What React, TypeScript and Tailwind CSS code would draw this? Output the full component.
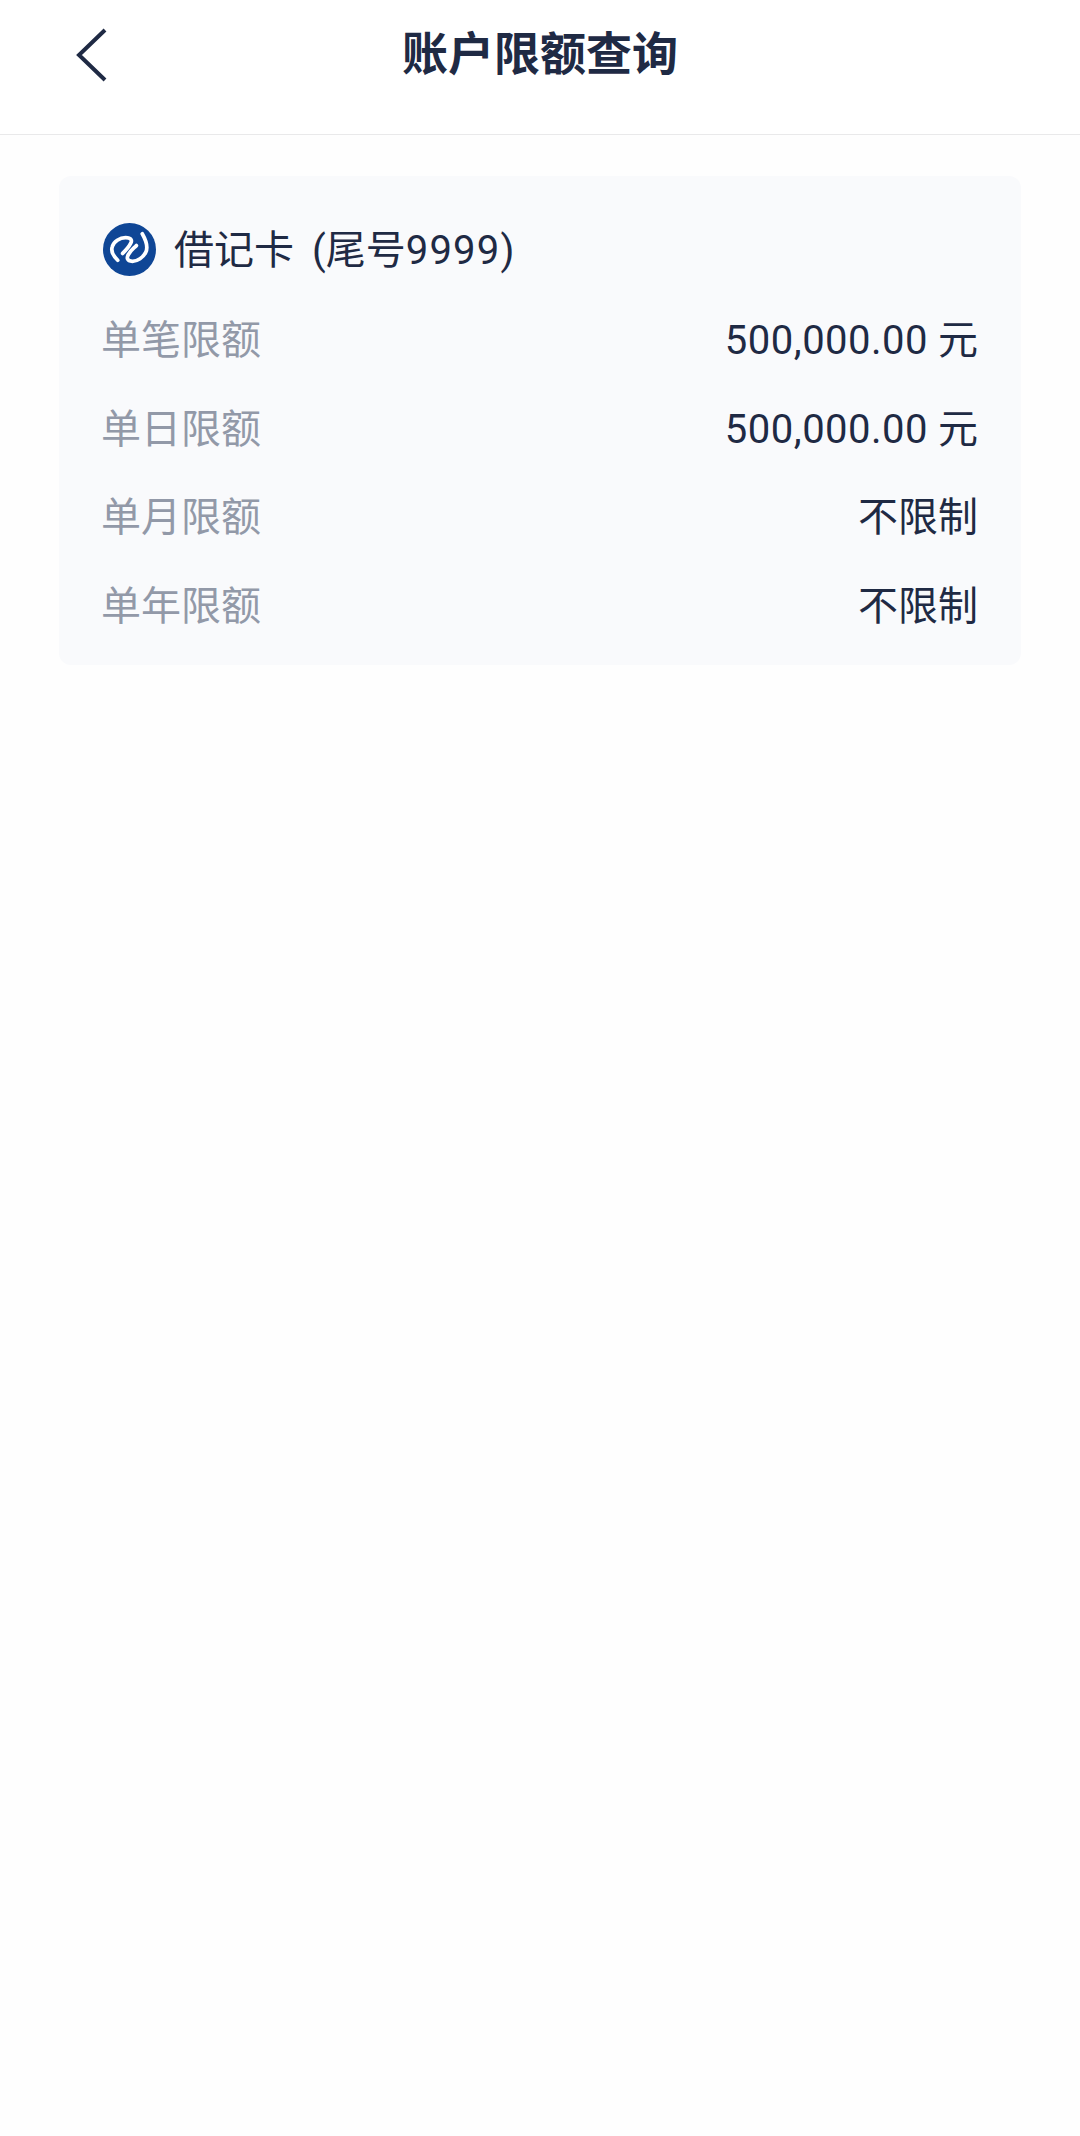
const limits = [
  { label: '单笔限额', amount: '500,000.00', unit: ' 元' },
  { label: '单日限额', amount: '500,000.00', unit: ' 元' },
  { label: '单月限额', amount: '', unit: '不限制' },
  { label: '单年限额', amount: '', unit: '不限制' },
];

function BankLogo() {
  return (
    <svg width="53" height="53" viewBox="0 0 54 54" className="ml-[2px] shrink-0">
      <circle cx="27" cy="27" r="27" fill="#0f4696" />
      <g fill="none" stroke="#fff" strokeWidth="3.8" strokeLinecap="round">
        <path d="M15 38 C10 33 8 28 9.5 24 C11 19 17 15 23 15 C29 15 30 18 28 21 C26 25 23 28 20 31" />
        <path d="M40 11 C44 18 46 25 43.5 30 C41 35 35 39 30 39 C24 39 24 35 26 32 C28 28 31 26 34 23" />
      </g>
    </svg>
  );
}

export default function App() {
  return (
    <div className="min-h-[2136px] w-full bg-[#fefefe] text-[#1f2a44] font-['Roboto','Noto_Sans_CJK_SC',sans-serif]">
      <header className="relative flex h-[135px] items-start justify-center border-b border-[#e9e9ea] bg-white pt-[23px]">
        <svg
          width="34"
          height="54"
          viewBox="0 0 34 54"
          className="absolute left-[75px] top-[28px]"
          fill="none"
          stroke="#1f2a44"
          strokeWidth="4"
        >
          <path d="M30 2 L4 27 L30 52" />
        </svg>
        <h1 className="text-[46px] leading-[62px] font-bold">账户限额查询</h1>
      </header>

      <section className="mx-[59px] mt-[41px] flex h-[489px] flex-col rounded-[12px] bg-[#f9fafc] pr-[43px] pl-[42px] pt-[46px]">
        <div className="flex h-[54px] items-center gap-[18px]">
          <BankLogo />
          <span className="relative top-[2px] text-[40px] leading-[54px]">
            借记卡<span className="ml-[18px]">(</span>尾号<span className="tracking-[1.2px]">9999)</span>
          </span>
        </div>
        <div className="mt-[21px] flex flex-col">
          {limits.map((row) => (
            <div key={row.label} className="flex h-[88.5px] items-center justify-between text-[40px]">
              <span className="text-[#9299a8]">{row.label}</span>
              <span>
                <span className="tracking-[0.5px]">{row.amount}</span>
                {row.unit}
              </span>
            </div>
          ))}
        </div>
      </section>
    </div>
  );
}
